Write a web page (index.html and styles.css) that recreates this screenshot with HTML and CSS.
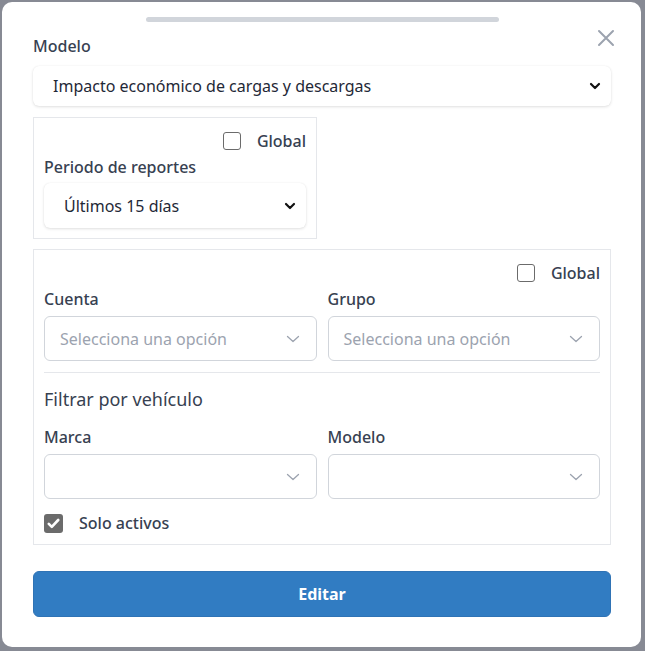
FILE: index.html
```html
<!DOCTYPE html>
<html lang="es">
<head>
<meta charset="utf-8">
<link rel="stylesheet" href="styles.css">
</head>
<body>
<div class="modal">
  <div class="handle"></div>
  <button class="close" aria-label="Cerrar">
    <svg width="18" height="18" viewBox="0 0 18 18"><path d="M2 2L16 16M16 2L2 16" stroke="#9ca3af" stroke-width="2" stroke-linecap="round"/></svg>
  </button>
  <div class="label top-label">Modelo</div>
  <div class="select shadow wide">
    <span class="value">Impacto económico de cargas y descargas</span>
    <svg class="chev-bold" width="12" height="8" viewBox="0 0 12 8"><path d="M2 2L6 6L10 2" fill="none" stroke="#111" stroke-width="2.2" stroke-linecap="round" stroke-linejoin="round"/></svg>
  </div>

  <div class="box period">
    <div class="global-row">
      <span class="cb"></span><span class="label">Global</span>
    </div>
    <div class="label field-label">Periodo de reportes</div>
    <div class="select shadow tall">
      <span class="value">Últimos 15 días</span>
      <svg class="chev-bold" width="12" height="8" viewBox="0 0 12 8"><path d="M2 2L6 6L10 2" fill="none" stroke="#111" stroke-width="2.2" stroke-linecap="round" stroke-linejoin="round"/></svg>
    </div>
  </div>

  <div class="box filters">
    <div class="global-row">
      <span class="cb"></span><span class="label">Global</span>
    </div>
    <div class="grid2">
      <div class="field">
        <div class="label field-label">Cuenta</div>
        <div class="combo"><span class="ph">Selecciona una opción</span><svg class="chev" width="14" height="8" viewBox="0 0 14 8"><path d="M1.5 1.5L7 6.5L12.5 1.5" fill="none" stroke="#9ca3af" stroke-width="1.3" stroke-linecap="round" stroke-linejoin="round"/></svg></div>
      </div>
      <div class="field">
        <div class="label field-label">Grupo</div>
        <div class="combo"><span class="ph">Selecciona una opción</span><svg class="chev" width="14" height="8" viewBox="0 0 14 8"><path d="M1.5 1.5L7 6.5L12.5 1.5" fill="none" stroke="#9ca3af" stroke-width="1.3" stroke-linecap="round" stroke-linejoin="round"/></svg></div>
      </div>
    </div>
    <div class="divider"></div>
    <div class="section-title">Filtrar por vehículo</div>
    <div class="grid2">
      <div class="field">
        <div class="label field-label">Marca</div>
        <div class="combo"><span class="ph"></span><svg class="chev" width="14" height="8" viewBox="0 0 14 8"><path d="M1.5 1.5L7 6.5L12.5 1.5" fill="none" stroke="#9ca3af" stroke-width="1.3" stroke-linecap="round" stroke-linejoin="round"/></svg></div>
      </div>
      <div class="field">
        <div class="label field-label">Modelo</div>
        <div class="combo"><span class="ph"></span><svg class="chev" width="14" height="8" viewBox="0 0 14 8"><path d="M1.5 1.5L7 6.5L12.5 1.5" fill="none" stroke="#9ca3af" stroke-width="1.3" stroke-linecap="round" stroke-linejoin="round"/></svg></div>
      </div>
    </div>
    <div class="active-row">
      <span class="cb checked"><svg width="13" height="11" viewBox="0 0 13 11"><path d="M1.8 5.8L4.8 8.8L11.2 2" fill="none" stroke="#fff" stroke-width="2.6" stroke-linecap="round" stroke-linejoin="round"/></svg></span>
      <span class="label">Solo activos</span>
    </div>
  </div>

  <button class="submit">Editar</button>
</div>
</body>
</html>
```

FILE: styles.css
```css
* { box-sizing: border-box; }
html, body { margin: 0; padding: 0; }
body {
  background: #878a94;
  width: 645px;
  height: 651px;
  overflow: hidden;
  font-family: "Noto Sans", "Open Sans", Arial, sans-serif;
  color: #374151;
}
.modal {
  position: relative;
  margin: 2px 0 0 2px;
  width: 639px;
  height: 645px;
  background: #fff;
  border-radius: 10px;
  padding: 15px 30px 0 31px;
  display: flex;
  flex-direction: column;
}
.handle {
  width: 353px;
  height: 5px;
  background: #d1d5db;
  border-radius: 3px;
  align-self: center;
}
.close {
  position: absolute;
  top: 25px;
  right: 24px;
  width: 22px;
  height: 22px;
  padding: 2px;
  border: 0;
  background: none;
  display: flex;
  align-items: center;
  justify-content: center;
}
.label {
  font-size: 16px;
  font-weight: 500;
  line-height: 24px;
  color: #374151;
}
.top-label { margin-top: 12px; }
.select {
  display: flex;
  align-items: center;
  justify-content: space-between;
  background: #fff;
  border-radius: 6px;
  padding: 0 10px 0 20px;
  font-size: 16px;
  color: #1f2937;
}
.shadow { box-shadow: 0 1px 3px rgba(0,0,0,0.12), 0 0 1px rgba(0,0,0,0.08); }
.wide { height: 40px; margin-top: 8px; }
.tall { height: 45px; margin-top: 4px; }
.chev-bold { display: block; }
.box {
  border: 1px solid #e5e7eb;
  padding: 11px 10px 9px 10px;
}
.period {
  width: 284px;
  margin-top: 11px;
  padding-bottom: 10px;
}
.filters {
  margin-top: 10px;
}
.global-row {
  display: flex;
  justify-content: flex-end;
  align-items: center;
  gap: 16px;
  height: 24px;
}
.cb {
  width: 18px;
  height: 18px;
  border: 1.5px solid #6b6b6b;
  border-radius: 3px;
  display: inline-flex;
  align-items: center;
  justify-content: center;
  background: #fff;
}
.cb.checked {
  width: 19px;
  height: 19px;
  border: 0;
  background: #6b6b6b;
}
.field-label { margin-top: 2px; }
.grid2 {
  display: grid;
  grid-template-columns: 1fr 1fr;
  column-gap: 11px;
}
.combo {
  margin-top: 5px;
  height: 45px;
  border: 1px solid #d1d5db;
  border-radius: 6px;
  display: flex;
  align-items: center;
  justify-content: space-between;
  padding: 0 16px 0 15px;
}
.ph {
  font-size: 16px;
  color: #9ca3af;
}
.chev { display: block; }
.divider {
  height: 1px;
  background: #e5e7eb;
  margin-top: 11px;
}
.section-title {
  margin-top: 14px;
  font-size: 18px;
  line-height: 24px;
  color: #374151;
}
.filters .section-title + .grid2 .field-label { margin-top: 14px; }
.active-row {
  display: flex;
  align-items: center;
  gap: 16px;
  margin-top: 12px;
  height: 24px;
}
.submit {
  margin-top: 26px;
  height: 46px;
  width: 100%;
  background: #317cc2;
  border: 1px solid #2f73b5;
  border-radius: 6px;
  color: #fff;
  font-family: inherit;
  font-size: 16px;
  font-weight: 700;
}
```
